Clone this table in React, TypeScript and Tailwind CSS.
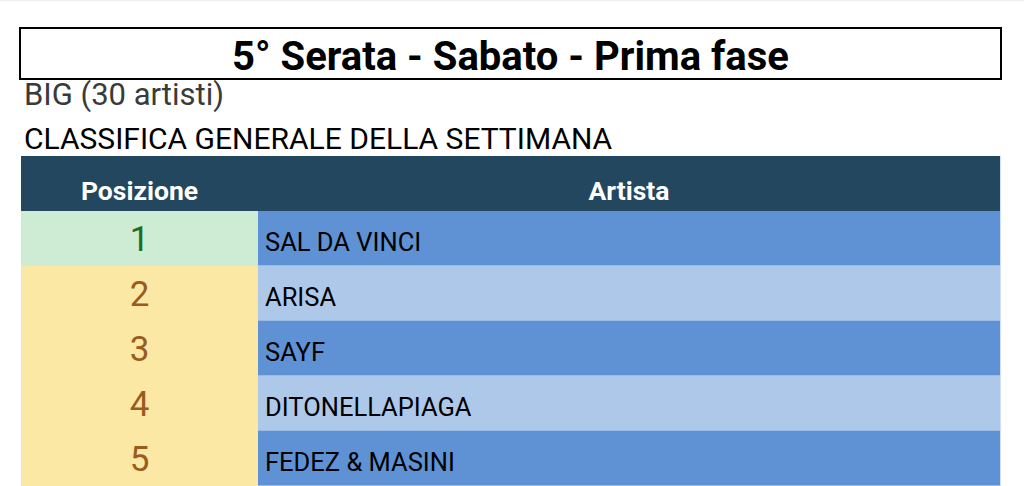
import React from "react";

const rows = [
  { pos: 1, name: "SAL DA VINCI" },
  { pos: 2, name: "ARISA" },
  { pos: 3, name: "SAYF" },
  { pos: 4, name: "DITONELLAPIAGA" },
  { pos: 5, name: "FEDEZ & MASINI" },
];

export default function App() {
  return (
    <div className="w-[1024px] h-[486px] overflow-hidden bg-white border-t border-[#eeeeee]" style={{ fontFamily: "Roboto, sans-serif" }}>
      <div className="pl-[19px] pr-[22px] pt-[26px]">
        <div className="h-[53px] border-2 border-black flex items-start justify-center pt-[8px]">
          <span className="text-[40px] font-bold text-black leading-none">5° Serata - Sabato - Prima fase</span>
        </div>
        <div className="pl-[5px] text-[31px] leading-[30px] text-[#3a3a3a]">BIG (30 artisti)</div>
        <div className="pl-[5px] text-[30px] leading-[30px] text-black mt-[14px]">CLASSIFICA GENERALE DELLA SETTIMANA</div>
        <div className="ml-[2px] mt-[2px] w-[980px] border-r border-[#cfe0f4]">
          <div className="flex h-[55px] bg-[#23475e] text-white font-bold text-[26.5px] leading-none">
            <div className="w-[237px] flex justify-center pt-[22px]">Posizione</div>
            <div className="flex-1 flex justify-center pt-[22px]">Artista</div>
          </div>
          {rows.map((r, i) => (
            <div key={r.pos} className="flex h-[55px]">
              <div
                className={
                  "w-[237px] flex items-center justify-center text-[35px] pt-[3px] " +
                  (i === 0 ? "bg-[#ceebd3] text-[#226b22]" : "bg-[#fbe8a5] text-[#9a5b21]")
                }
              >
                {r.pos}
              </div>
              <div
                className={
                  "flex-1 flex items-center pl-[7px] pt-[8px] text-[25.5px] text-black border-b border-[#9bbbe6] " +
                  (i % 2 === 0 ? "bg-[#5e92d4]" : "bg-[#aec8e9]")
                }
              >
                {r.name}
              </div>
            </div>
          ))}
        </div>
      </div>
    </div>
  );
}
